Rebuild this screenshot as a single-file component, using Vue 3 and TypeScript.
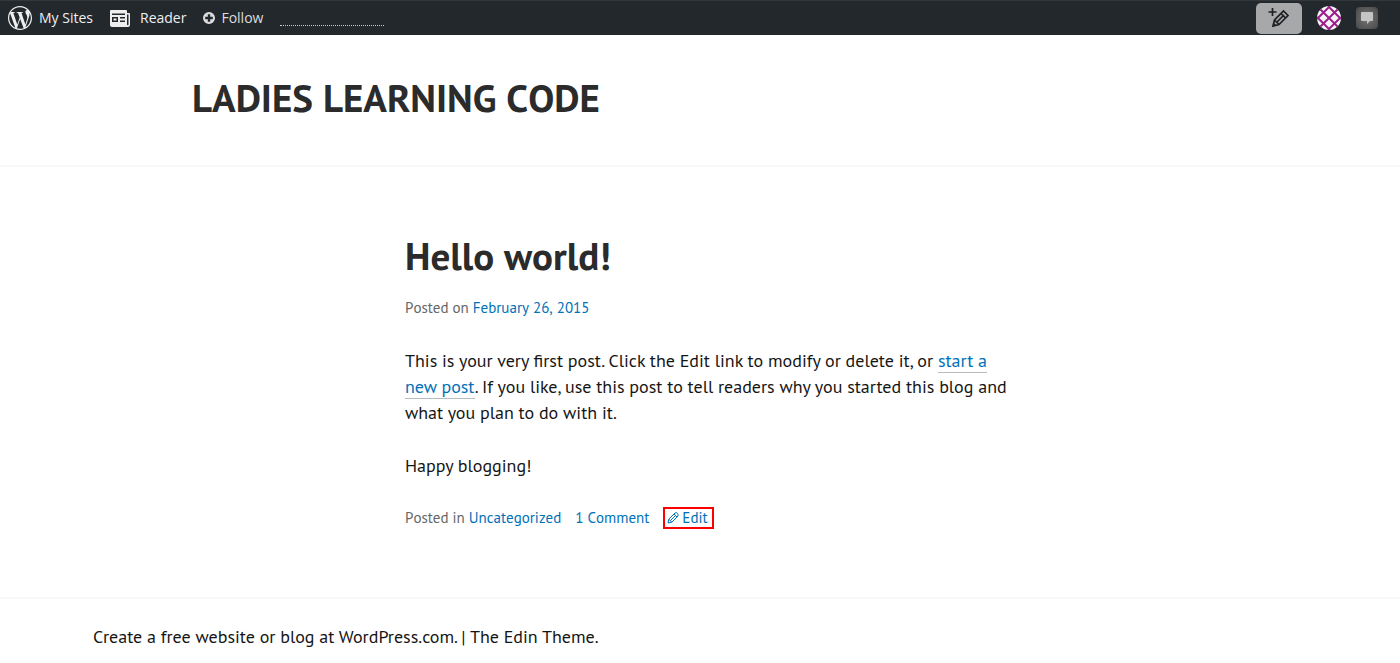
<script setup lang="ts">
interface FooterLink {
  label: string
  href: string
}

const siteTitle = 'LADIES LEARNING CODE'
const footerLinks: FooterLink[] = [
  { label: 'Create a free website or blog at WordPress.com.', href: '#wordpress' },
  { label: 'The Edin Theme.', href: '#theme' },
]
</script>

<template>
  <div class="page">
    <nav class="adminbar" aria-label="Toolbar">
      <a class="bar-link sites" href="#sites">
        <svg class="wp-logo" viewBox="0 0 24 24" aria-hidden="true">
          <path fill="currentColor" d="M21.469 6.825c.84 1.537 1.318 3.3 1.318 5.175 0 3.979-2.156 7.456-5.363 9.325l3.295-9.527c.615-1.54.82-2.771.82-3.864 0-.405-.026-.78-.07-1.11m-7.981.105c.647-.03 1.232-.105 1.232-.105.582-.075.514-.93-.067-.899 0 0-1.755.135-2.88.135-1.064 0-2.85-.15-2.85-.15-.585-.03-.661.855-.075.885 0 0 .54.061 1.125.09l1.68 4.605-2.37 7.08L5.354 6.9c.649-.03 1.234-.1 1.234-.1.585-.075.516-.93-.065-.896 0 0-1.746.138-2.874.138-.2 0-.438-.008-.69-.015C4.911 3.15 8.235 1.215 12 1.215c2.809 0 5.365 1.072 7.286 2.833-.046-.003-.091-.009-.141-.009-1.06 0-1.812.923-1.812 1.914 0 .89.513 1.643 1.06 2.531.411.72.89 1.643.89 2.977 0 .915-.354 1.994-.821 3.479l-1.075 3.585-3.9-11.61.001.014zM12 22.784c-1.059 0-2.081-.153-3.048-.437l3.237-9.406 3.315 9.087c.024.053.05.101.078.149-1.12.393-2.325.609-3.582.609M1.211 12c0-1.564.336-3.05.935-4.39L7.29 21.709C3.694 19.96 1.212 16.271 1.211 12M12 0C5.385 0 0 5.385 0 12s5.385 12 12 12 12-5.385 12-12S18.615 0 12 0" />
        </svg>
        <span>My Sites</span>
      </a>
      <a class="bar-link reader" href="#reader">
        <svg class="reader-icon" viewBox="0 0 20 17" aria-hidden="true">
          <path fill="currentColor" fill-rule="evenodd" d="M1 0h15a1 1 0 0 1 1 1v2h2a1 1 0 0 1 1 1v11a2 2 0 0 1-2 2H2a2 2 0 0 1-2-2V1a1 1 0 0 1 1-1zM2 3.500v1.500h13V3.500zM2 7v5h6V7zM3.500 8.500h3v2h-3zM10 7v1.500h5V7zM10 10.500v1.500h5v-1.500zM17 4.500V14.500a.75.75 0 0 0 1.500 0v-10z" />
        </svg>
        <span>Reader</span>
      </a>
      <button class="bar-link follow" type="button">
        <svg class="follow-icon" viewBox="0 0 12 12" aria-hidden="true">
          <path fill="currentColor" fill-rule="evenodd" d="M6 0a6 6 0 1 0 0 12A6 6 0 0 0 6 0zM4.800 2.200h2.400v2.600h2.600v2.400H7.200v2.600H4.800V7.200H2.200V4.800h2.600z" />
        </svg>
        <span>Follow</span>
      </button>
      <span class="dotted-rule"></span>

      <div class="bar-actions">
        <button class="compose" type="button" aria-label="New post">
          <svg viewBox="0 0 22 20" aria-hidden="true">
            <g fill="none" stroke="#1d2124" stroke-width="1.700">
              <path d="M4.500 0v8M.5 4h8" />
              <path d="M5 18l1.500-6L15.500 3l4.500 4.500-9 9zM6.500 12l4.500 4.500M13 5.500l4.500 4.500M9 14l7-7" />
            </g>
            <path fill="#1d2124" d="M4.500 18.500l1-4 3 3z" />
          </svg>
        </button>
        <button class="avatar" type="button" aria-label="My account">
          <svg viewBox="0 0 24 24" aria-hidden="true">
            <defs>
              <clipPath id="avatar-disc"><circle cx="12" cy="12" r="12" /></clipPath>
            </defs>
            <g clip-path="url(#avatar-disc)">
              <path fill="#f7f4f7" d="M0 0h24v24H0z" />
              <path fill="none" stroke="#9a1f8c" stroke-width="2" d="M0 24L24 0M0 13L13 0M11 24L24 11M0 0L24 24M11 0L24 13M0 11L13 24" />
            </g>
          </svg>
        </button>
        <button class="notes" type="button" aria-label="Notifications">
          <svg viewBox="0 0 12 12" aria-hidden="true">
            <path fill="#c4c4c4" d="M1 0h10a1 1 0 0 1 1 1v7a1 1 0 0 1-1 1H9l-3 3V9H1a1 1 0 0 1-1-1V1a1 1 0 0 1 1-1z" />
          </svg>
        </button>
      </div>
    </nav>

    <header class="site-header">
      <h1 class="site-title"><a href="#home">{{ siteTitle }}</a></h1>
    </header>

    <main class="content">
      <article class="post">
        <h2 class="post-title">Hello world!</h2>
        <p class="meta">Posted on <a href="#date">February 26, 2015</a></p>
        <p class="body-text">
          This is your very first post. Click the Edit link to modify or delete it, or
          <a href="#new-post">start a new post</a>. If you like, use this post to tell readers why you started this blog and what you plan to do with it.
        </p>
        <p class="body-text">Happy blogging!</p>
        <div class="meta post-footer">
          <span>Posted in <a href="#uncategorized">Uncategorized</a></span>
          <a href="#comments">1 Comment</a>
          <a class="edit" href="#edit">
            <svg viewBox="0 0 12 12" aria-hidden="true">
              <path fill="none" stroke="currentColor" d="M1 11l.8-3.800L8 1q1.200-.8 2.300.3T11 4L4.800 10.200zM1.800 7.200l3 3M3.500 8.500L9 3M7 2l3 3" />
            </svg>
            <span>Edit</span>
          </a>
        </div>
      </article>
    </main>

    <footer class="site-footer">
      <div class="footer-inner">
        <a :href="footerLinks[0].href">{{ footerLinks[0].label }}</a>
        <span> | </span>
        <a :href="footerLinks[1].href">{{ footerLinks[1].label }}</a>
      </div>
    </footer>
  </div>
</template>

<style>
body {
  margin: 0;
  background: #fff;
}
</style>

<style scoped>
.page {
  color: #151515;
  font-family: "PT Sans", "Noto Sans CJK SC", "Open Sans", sans-serif;
  font-size: 18px;
  line-height: 26px;
}

a {
  color: #0071b8;
  text-decoration: none;
}

button {
  border: 0;
  padding: 0;
  background: none;
  font: inherit;
  cursor: pointer;
}

svg {
  display: block;
  flex: none;
}

.adminbar {
  display: flex;
  align-items: center;
  box-sizing: border-box;
  height: 35px;
  padding: 0 22px 0 8px;
  border-top: 1px solid #33383c;
  background: #23282d;
  font-family: "Open Sans", sans-serif;
  font-size: 14px;
  line-height: 20px;
}

.bar-link {
  display: flex;
  align-items: center;
  color: #eee;
}

.sites {
  gap: 7px;
}

.wp-logo {
  width: 24px;
  height: 24px;
}

.reader {
  gap: 10px;
  margin-left: 17px;
}

.reader-icon {
  width: 20px;
  height: 17px;
}

.follow {
  gap: 6px;
  margin-left: 17px;
  color: #ddd;
}

.follow-icon {
  width: 12px;
  height: 12px;
}

.dotted-rule {
  align-self: flex-end;
  width: 104px;
  margin: 0 0 9px 17px;
  border-bottom: 1px dotted #ccc;
}

.bar-actions {
  display: flex;
  align-items: center;
  gap: 15px;
  margin-left: auto;
}

.compose {
  display: flex;
  align-items: center;
  justify-content: center;
  width: 46px;
  height: 31px;
  border-radius: 5px;
  background: #a7a8aa;
}

.compose svg {
  width: 22px;
  height: 20px;
}

.avatar svg {
  width: 24px;
  height: 24px;
}

.notes {
  display: flex;
  align-items: center;
  justify-content: center;
  width: 22px;
  height: 22px;
  border-radius: 4px;
  background: radial-gradient(#777, #464646);
}

.notes svg {
  width: 12px;
  height: 12px;
}

.site-header {
  padding: 39px 0 43px;
  border-bottom: 2px solid #f9f9f9;
}

.site-title,
.post-title {
  margin: 0;
  color: #2b2b2b;
  font-size: 39px;
  font-kerning: none;
  font-weight: 700;
  line-height: 48px;
}

.site-title {
  max-width: 1016px;
  margin: 0 auto;
}

.site-title a {
  color: inherit;
}

.content {
  max-width: 1016px;
  margin: 0 auto;
  padding: 65px 0 66px;
}

.post {
  max-width: 604px;
  margin: 0 auto 0 213px;
}

.meta {
  margin: 15px 0 0;
  color: #666;
  font-size: 15px;
  font-kerning: none;
}

.body-text {
  margin: 27px 0 0;
}

.body-text a {
  border-bottom: 1px solid #b9bcbf;
}

.post-footer {
  display: flex;
  align-items: center;
  gap: 14px;
  margin-top: 26px;
}

.edit {
  display: flex;
  align-items: center;
  gap: 3px;
  padding: 0 4px 0 2px;
  border: 2px solid #ff0000;
  line-height: 18px;
}

.edit svg {
  width: 12px;
  height: 12px;
}

.site-footer {
  padding: 25px 0 26px;
  border-top: 2px solid #f9f9f9;
}

.footer-inner {
  max-width: 1214px;
  margin: 0 auto;
}

.footer-inner a {
  color: inherit;
}
</style>
